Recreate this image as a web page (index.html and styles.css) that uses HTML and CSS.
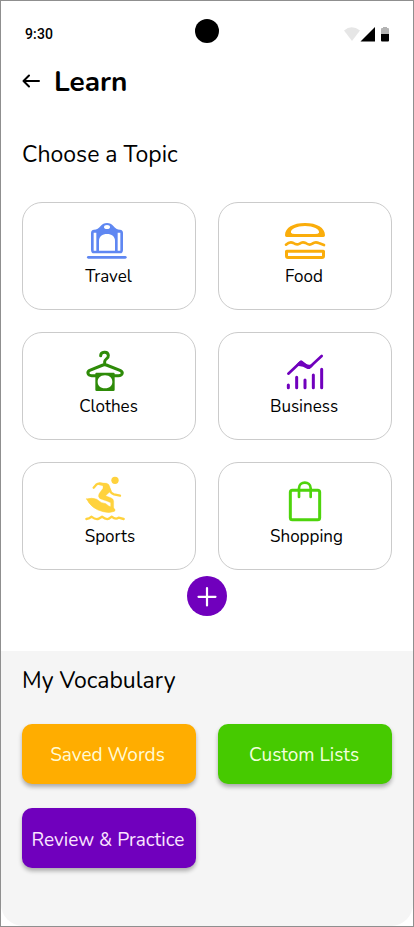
FILE: index.html
```html
<!DOCTYPE html>
<html lang="en">
<head>
<meta charset="utf-8">
<title>Learn</title>
<link rel="stylesheet" href="styles.css">
</head>
<body>
<main class="phone">
  <div class="status">
    <span class="time">9:30</span>
    <span class="camera"></span>
    <svg class="indicators" viewBox="0 0 48 16" width="48" height="16">
      <path d="M1 4.500Q8.500-2 17 4.500L9 15Z" fill="#e6e6e6"/>
      <path d="M17.500 15.500L32 1V15.500Z" fill="#000"/>
      <path d="M38 8V3Q38 2 39 2H40V1H44V2H45Q46 2 46 3V8Z" fill="#b3b3b3"/>
      <path d="M38 8H46V14.500Q46 15.500 45 15.500H39Q38 15.500 38 14.500Z" fill="#000"/>
    </svg>
  </div>
  <header class="header">
    <svg class="back" viewBox="0 0 18 14" width="18" height="14"><path d="M17 7H1.500M7 1.500L1.500 7L7 12.500"/></svg>
    <h1>Learn</h1>
  </header>
  <h2 class="choose"><span>Choose a Topic</span></h2>
  <section class="topics">
    <div class="card">
      <svg class="icon travel" viewBox="45 18 144 144">
        <path d="M55 142H166" stroke-width="8"/>
        <path d="M72 59Q84 59 92 48Q99 39 111 39T130 48Q138 59 150 59Q159 60 159 69V119Q159 130 150 130H72Q63 130 63 119V69Q63 60 72 59Z" fill="currentColor" stroke="none"/>
        <path d="M87 122V93C87 79 97 72 111 72S135 79 135 93V122Z" fill="#fff" stroke="none"/>
        <path d="M71 68H79V122H71ZM143 68H151V122H143Z" fill="#fff" stroke="none"/>
        <ellipse cx="111" cy="51" rx="9" ry="6" fill="#fff" stroke="none"/>
      </svg>
      <span class="label travel-label">Travel</span>
    </div>
    <div class="card">
      <svg class="icon food" viewBox="48 18 144 144">
        <path fill-rule="evenodd" fill="currentColor" stroke="none" d="M60 76C60 53 84 39 120 39S180 53 180 76Q180 81 175 81H65Q60 81 60 76ZM78 68Q80 72 90 72H150Q160 72 162 68C164 57 145 48 120 48S76 57 78 68Z"/>
        <path d="M63 104Q74 94 85 99Q95 106 104 101Q112 94 122 99Q133 107 142 101Q151 94 161 99L177 105" stroke-width="8"/>
        <path fill-rule="evenodd" fill="currentColor" stroke="none" d="M65 119H175Q180 119 180 124V138Q180 147 171 147H69Q60 147 60 138V124Q60 119 65 119ZM69 128V138H171V128Z"/>
      </svg>
      <span class="label food-label">Food</span>
    </div>
    <div class="card">
      <svg class="icon clothes" viewBox="45 18 144 144">
        <path d="M92 47C92 35 113 32 115 46C116 57 104 56 104 65V74M77 107H65C53 107 50 96 59 91L99 75Q104 73 109 75L150 91C161 96 158 107 145 107H133" stroke-width="9"/>
        <path fill-rule="evenodd" fill="currentColor" stroke="none" d="M79 98H131Q134 98 134 101V149Q134 153 130 153H80Q76 153 76 149V101Q76 98 79 98ZM105 106C90 106 83 115 83 126S91 145 105 145 127 137 127 126 120 106 105 106Z"/>
      </svg>
      <span class="label clothes-label">Clothes</span>
    </div>
    <div class="card">
      <svg class="icon business" viewBox="48 18 144 144">
        <path d="M70 101L108 65L132 83L170 48" stroke-width="8"/>
        <path d="M94 75Q104 59 112 64Q120 75 136 74L149 70Q137 91 126 86Q111 76 94 79Z" fill="currentColor" stroke="none"/>
        <path d="M70 135V143M95 112V143M120 120V143M145 105V143M170 88V143" stroke-width="9"/>
      </svg>
      <span class="label business-label">Business</span>
    </div>
    <div class="card">
      <svg class="icon sports" viewBox="45 18 144 144">
        <circle cx="135" cy="31" r="11" fill="currentColor" stroke="none"/>
        <path d="M71 53L80 43Q84 40 90 41L107 44M119 58Q121 70 132 73L150 77" stroke-width="7"/>
        <path d="M88 38L110 40Q117 42 119 49L123 63L118 67L107 77L124 84Q131 87 131 94V120L122 116V98L112 94L90 86Q82 80 88 70L99 55V47L88 45Z" fill="currentColor" stroke-width="1"/>
        <path d="M50 87Q66 82 80 88L94 98L107 101L116 108L130 114Q139 119 133 124Q119 130 100 125Q64 117 50 87Z" fill="currentColor" stroke-width="2"/>
        <path d="M49 147Q59 146 64 140Q78 150 86 146L96 140Q108 150 117 146L125 140Q137 150 146 143L161 147" stroke-width="7"/>
      </svg>
      <span class="label sports-label">Sports</span>
    </div>
    <div class="card">
      <svg class="icon shopping" viewBox="48 18 144 144">
        <rect x="76" y="61" width="88" height="88" rx="6" stroke-width="9"/>
        <path d="M102 81V55C102 32 137 32 137 55V81" stroke-width="8"/>
      </svg>
      <span class="label shopping-label">Shopping</span>
    </div>
  </section>
  <button class="add" aria-label="Add topic"><svg viewBox="0 0 40 40" width="40" height="40"><path d="M20 12V29.500M11.500 20.800H28.500"/></svg></button>
  <section class="vocab">
    <h2><span>My Vocabulary</span></h2>
    <div class="actions">
      <button class="btn saved"><span>Saved Words</span></button>
      <button class="btn custom"><span>Custom Lists</span></button>
      <button class="btn review"><span>Review &amp; Practice</span></button>
    </div>
  </section>
</main>
</body>
</html>
```
FILE: styles.css
```css
* { box-sizing: border-box; }
body { margin: 0; background: #fff; color: #000; font-family: Nunito, Lato, "Open Sans", sans-serif; }
.phone { width: 414px; height: 927px; border: 1px solid #8f8f8f; display: flex; flex-direction: column; overflow: hidden; }
.status { height: 60px; padding: 0 23px 0 24px; display: grid; grid-template-columns: 170px 24px 1fr; align-items: center; }
.time { font: 500 14px/20px Roboto, sans-serif; letter-spacing: .15px; padding-top: 5px; }
.camera { width: 24px; height: 24px; border-radius: 50%; background: #000; }
.indicators { justify-self: end; margin: 6px -1px 0 0; }
.header { height: 40px; display: flex; align-items: center; padding-left: 21px; gap: 14px; }
.back { fill: none; stroke: #000; stroke-width: 2; stroke-linecap: round; stroke-linejoin: round; }
h1, h2 { margin: 0; white-space: nowrap; }
h1 { font-size: 28px; line-height: 40px; font-weight: 700; padding-top: 2px; }
h2 { font-size: 23px; line-height: 32px; font-weight: 400; padding-left: 21px; }
.choose { margin-top: 38px; }
.topics { display: grid; grid-template-columns: 174px 174px; grid-auto-rows: 108px; gap: 22px; padding: 31px 0 0 21px; }
.card { border: 1px solid #cbcbcb; border-radius: 20px; padding-top: 13px; display: flex; flex-direction: column; align-items: center; }
.icon { width: 48px; height: 48px; fill: none; stroke: currentColor; stroke-linecap: round; stroke-linejoin: round; flex: none; }
.travel { color: #5f87f2; }
.food { color: #faad0b; }
.clothes { color: #2e8b08; }
.business { color: #7000bd; }
.sports { color: #ffd23d; }
.shopping { color: #4ed40c; }
.label { font-size: 17px; line-height: 24px; margin-top: 1px; white-space: nowrap; }
.travel-label, .clothes-label { margin-right: 1px; }
.food-label, .business-label { margin-right: 2px; }
.sports-label { margin-left: 2px; }
.shopping-label { margin-left: 3px; }
.add { width: 40px; height: 40px; flex: none; margin: 6px 0 0 186px; padding: 0; border: 0; border-radius: 50%; background: #7000bd; }
.add svg { display: block; fill: none; stroke: #fff; stroke-width: 2.200; stroke-linecap: round; }
.vocab { margin-top: 35px; flex: 1; background: #f5f5f5; border-radius: 0 0 22px 22px; padding-top: 14px; }
.actions { display: grid; grid-template-columns: 174px 174px; grid-auto-rows: 60px; gap: 24px 22px; padding: 27px 0 0 21px; }
.btn { border: 0; border-radius: 10px; padding: 2px 2px 0 0; color: #fff; font: 400 19px/24px Nunito, Lato, sans-serif; white-space: nowrap; box-shadow: 0 3px 4px rgba(0, 0, 0, .3); }
.saved { background: #ffad00; color: #fffbd6; padding-right: 3px; }
.custom { background: #46ca00; color: #f2ffdc; }
.review { background: #7000bd; color: #fbe5ff; padding-top: 4px; }
```
